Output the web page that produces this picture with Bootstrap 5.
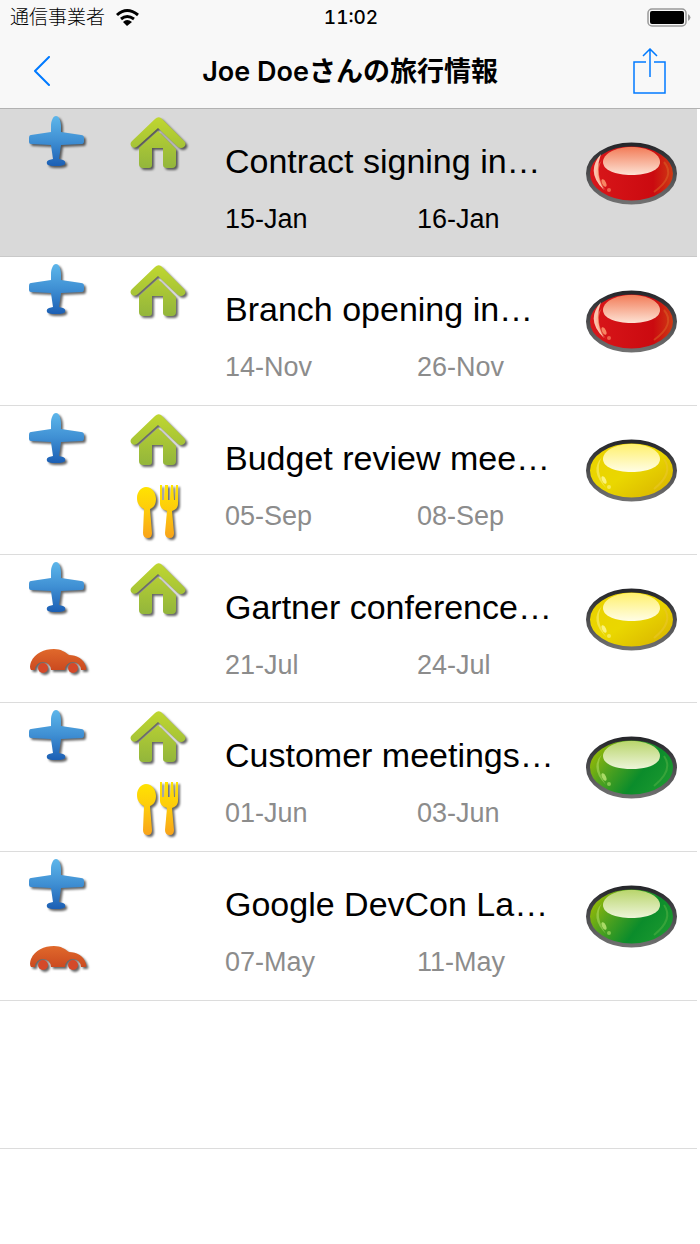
<!DOCTYPE html>
<html lang="ja">
<head>
<meta charset="utf-8">
<meta name="viewport" content="width=device-width, initial-scale=1">
<title>Joe Doeさんの旅行情報</title>
<link rel="stylesheet" href="https://cdn.jsdelivr.net/npm/bootstrap@5.3.0/dist/css/bootstrap.min.css">
<style>
  body { background: #fff; color: #000; font-family: "Liberation Sans", "Noto Sans CJK JP", sans-serif; }
  .app-header { background: #f8f8f8; border-bottom: 1px solid #b2b2b2; font-family: Inter, "Noto Sans CJK JP", sans-serif; }
  .status-bar { height: 36px; padding: 0 8px 0 10px; font-size: 19px; line-height: 36px; }
  .status-bar > div, .title-bar > div { flex: 1 1 0; }
  .carrier { font-weight: 300; }
  .clock { font-weight: 500; font-variant-numeric: tabular-nums; }
  .title-bar { height: 72px; padding: 0 32px; }
  .title-bar h1 { font-size: 27px; line-height: 40px; font-weight: 600; }
  .trips { padding-right: 3px; }
  .trip { height: 149px; border-bottom: 1px solid #dcdcdc; color: #000; }
  .trip:nth-child(3n+1) { height: 148px; }
  a.trip:hover { color: #000; }
  .trip.selected { background: #d9d9d9; border-color: #c9c9c9; }
  .trip-icons { display: grid; grid-template-columns: 60px 60px; grid-template-rows: 60px 60px; column-gap: 41px; row-gap: 12px; padding: 4px 0 0 27px; }
  .trip-icons svg { filter: drop-shadow(2px 2px 1px rgba(0,0,0,.6)); overflow: visible; }
  .in-second { grid-column: 2; grid-row: 2; }
  .in-first { grid-column: 1; grid-row: 2; }
  .trip-text { min-width: 0; padding: 32px 0 0 37px; }
  .trip-title { font-size: 34px; line-height: 40px; margin-bottom: 22px; }
  .trip-dates { font-size: 27px; line-height: 32px; color: #8c8c8c; }
  .selected .trip-dates { color: #000; }
  .trip-dates time { width: 192px; flex: none; }
  .lamp { margin: 33px 20px 0 8px; }
</style>
</head>
<body>
<svg width="0" height="0" class="position-absolute" aria-hidden="true">
  <defs>
    <linearGradient id="blue" x1="0" y1="0" x2="0" y2="1"><stop stop-color="#5db6ea"/><stop offset=".5" stop-color="#3f8fd3"/><stop offset="1" stop-color="#1c5fb4"/></linearGradient>
    <linearGradient id="lime" gradientUnits="userSpaceOnUse" x1="0" y1="5" x2="0" y2="56"><stop stop-color="#bfd630"/><stop offset="1" stop-color="#92b53c"/></linearGradient>
    <linearGradient id="gold" gradientUnits="userSpaceOnUse" x1="0" y1="3" x2="0" y2="58"><stop stop-color="#ffe500"/><stop offset=".5" stop-color="#fdc80d"/><stop offset="1" stop-color="#f8a01c"/></linearGradient>
    <linearGradient id="rust" x1="0" y1="0" x2="0" y2="1"><stop stop-color="#e0692b"/><stop offset="1" stop-color="#cb4a20"/></linearGradient>
    <linearGradient id="rim" x1="0" y1="0" x2="0" y2="1"><stop stop-color="#26272b"/><stop offset="1" stop-color="#707070"/></linearGradient>
    <linearGradient id="redbody" x1="0" y1="0" x2="1" y2="0"><stop stop-color="#d9171a"/><stop offset=".75" stop-color="#cb0a10"/><stop offset="1" stop-color="#cf3f14"/></linearGradient>
    <linearGradient id="yellowbody" x1="0" y1="0" x2="1" y2="1"><stop stop-color="#ead000"/><stop offset=".5" stop-color="#ead700"/><stop offset="1" stop-color="#d5ae00"/></linearGradient>
    <linearGradient id="greenbody" x1="0" y1=".2" x2="1" y2=".7"><stop stop-color="#a5bf00"/><stop offset=".3" stop-color="#56a41d"/><stop offset=".65" stop-color="#0b8c2b"/><stop offset="1" stop-color="#1d9a30"/></linearGradient>
    <linearGradient id="redshine" x1="0" y1="0" x2="0" y2="1"><stop stop-color="#f27c58"/><stop offset="1" stop-color="#fde2d4"/></linearGradient>
    <linearGradient id="yellowshine" x1="0" y1="0" x2="0" y2="1"><stop stop-color="#fff06c"/><stop offset="1" stop-color="#fffde6"/></linearGradient>
    <linearGradient id="greenshine" x1="0" y1="0" x2="0" y2="1"><stop stop-color="#b9d56c"/><stop offset="1" stop-color="#edf5d9"/></linearGradient>

    <symbol id="plane" viewBox="0 0 60 60"><path fill="url(#blue)" d="M29 3C32 3 34 8 34 13V19L54 22Q57 22 57 25V28Q57 31 55 31L34 32L32 46L36 47Q39 48 38 51Q37 53 29 53Q21 53 20 51Q19 48 22 47L26 46L24 32L4 31Q2 31 2 29V25Q2 22 4 22L24 19V13C24 8 26 3 29 3Z"/></symbol>
    <symbol id="house" viewBox="0 0 60 60"><g fill="url(#lime)"><path d="M27 6Q30 3 33 5L56 28Q59 31 56 34Q53 36 50 34L30 15L10 33Q7 36 4 34Q1 31 4 28Z"/><path d="M30 18L48 36V51Q48 55 44 55H39Q35 55 35 52V35H24V52Q24 55 21 55H15Q11 55 11 51V35Z"/></g></symbol>
    <symbol id="cutlery" viewBox="0 0 60 60"><g fill="url(#gold)"><path d="M18 5C24 5 28 11 28 17C28 23 25 26 22 27L24 51Q24 56 20 56Q15 56 15 51L16 27C12 25 9 22 9 16C9 10 13 5 18 5Z"/><path d="M32 3H34V18H36L37 3H40V18H42L43 3H45L46 18H47L48 3H50V22Q50 27 44 29L46 51Q46 56 42 56Q37 56 37 51L39 29Q32 27 32 22Z"/></g></symbol>
    <symbol id="car" viewBox="0 0 60 60"><path fill="url(#rust)" d="M4 39Q2 36 4 31C8 22 17 18 27 18C34 18 38 21 42 24C50 24 57 28 59 36Q60 39 58 39H54A8 8 0 1 0 38 39H24A8 8 0 1 0 8 39Z"/><circle cx="16" cy="37" r="5" fill="#d4492a"/><circle cx="46" cy="37" r="5" fill="#d4492a"/></symbol>
    <symbol id="glint" viewBox="0 0 91 63"><path d="M16 18Q3 32 20 49Q8 31 16 18Z" opacity=".45"/><ellipse cx="18" cy="41" rx="2" ry="4" transform="rotate(-25 18 41)" opacity=".8"/><circle cx="23" cy="48" r="2" opacity=".55"/></symbol>
    <symbol id="red" viewBox="0 0 91 63"><ellipse cx="45.5" cy="31.5" rx="43.5" ry="29" fill="url(#redbody)" stroke="url(#rim)" stroke-width="4"/><path d="M15 12Q-1 30 18 48Q8 31 15 12Z" fill="#fbc3ad"/><path d="M78 20Q90 34 68 50" fill="none" stroke="#d85c24" stroke-width="2" opacity=".6"/><path d="M17 20C17 12 29 5 45.500 5S74 12 74 20C74 28 62 33 45.500 33S17 28 17 20Z" fill="url(#redshine)"/><use href="#glint" fill="#ffa276"/></symbol>
    <symbol id="yellow" viewBox="0 0 91 63"><ellipse cx="45.5" cy="31.5" rx="43.5" ry="29" fill="url(#yellowbody)" stroke="url(#rim)" stroke-width="4"/><path d="M78 20Q88 34 68 50" fill="none" stroke="#e9c72b" stroke-width="2" opacity=".6"/><path d="M17 20C17 12 29 5 45.500 5S74 12 74 20C74 28 62 33 45.500 33S17 28 17 20Z" fill="url(#yellowshine)"/><use href="#glint" fill="#fff99c"/></symbol>
    <symbol id="green" viewBox="0 0 91 63"><ellipse cx="45.5" cy="31.5" rx="43.5" ry="29" fill="url(#greenbody)" stroke="url(#rim)" stroke-width="4"/><path d="M78 20Q88 34 68 50" fill="none" stroke="#4eae43" stroke-width="2" opacity=".6"/><path d="M17 20C17 12 29 5 45.500 5S74 12 74 20C74 28 62 33 45.500 33S17 28 17 20Z" fill="url(#greenshine)"/><use href="#glint" fill="#c1e878"/></symbol>
  </defs>
</svg>

<header class="app-header">
  <div class="status-bar d-flex align-items-center">
    <div class="d-flex align-items-center">
      <span class="carrier">通信事業者</span>
      <svg class="ms-2" width="28" height="20" viewBox="0 0 28 20" aria-hidden="true"><g fill="none" stroke="#000" stroke-width="3"><path d="M4 7Q14 -2 25 7"/><path d="M8 11Q14 6 21 11"/></g><path d="M10 14Q14 10 19 14L14 18Z"/></svg>
    </div>
    <span class="clock">11:02</span>
    <div class="d-flex justify-content-end">
      <svg width="45" height="20" viewBox="0 0 45 20" aria-hidden="true"><rect x="1" y="1" width="38" height="17" rx="4" fill="none" stroke="#999" stroke-width="1.5"/><rect x="3" y="3" width="34" height="13" rx="2"/><path d="M41 6Q46 9.500 41 13Z" fill="#999"/></svg>
    </div>
  </div>
  <nav class="title-bar d-flex align-items-center">
    <div class="d-flex"><button type="button" class="btn p-0 border-0 d-flex" aria-label="戻る"><svg width="20" height="32" viewBox="0 0 20 32" fill="none" stroke="#007aff" stroke-width="2" stroke-linecap="round" stroke-linejoin="round"><path d="M17 1L3 15L17 29"/></svg></button></div>
    <h1 class="m-0 text-nowrap">Joe Doeさんの旅行情報</h1>
    <div class="d-flex justify-content-end"><button type="button" class="btn p-0 border-0 d-flex" aria-label="共有"><svg width="36" height="48" viewBox="0 0 36 48" fill="none" stroke="#007aff" stroke-width="1.5"><path d="M14 14H2V45H33V14H22M18 29V2M11 8L18 1L25 8"/></svg></button></div>
  </nav>
</header>

<main class="trips list-group list-group-flush rounded-0">
  <a href="#t1" class="trip selected d-flex text-decoration-none" aria-current="true">
    <span class="trip-icons"><svg width="60" height="60"><use href="#plane"/></svg><svg width="60" height="60"><use href="#house"/></svg></span>
    <span class="trip-text flex-fill"><span class="trip-title d-block text-nowrap">Contract signing in…</span><span class="trip-dates d-flex"><time>15-Jan</time><time>16-Jan</time></span></span>
    <svg class="lamp flex-shrink-0" width="91" height="63"><use href="#red"/></svg>
  </a>
  <a href="#t2" class="trip d-flex text-decoration-none">
    <span class="trip-icons"><svg width="60" height="60"><use href="#plane"/></svg><svg width="60" height="60"><use href="#house"/></svg></span>
    <span class="trip-text flex-fill"><span class="trip-title d-block text-nowrap">Branch opening in…</span><span class="trip-dates d-flex"><time>14-Nov</time><time>26-Nov</time></span></span>
    <svg class="lamp flex-shrink-0" width="91" height="63"><use href="#red"/></svg>
  </a>
  <a href="#t3" class="trip d-flex text-decoration-none">
    <span class="trip-icons"><svg width="60" height="60"><use href="#plane"/></svg><svg width="60" height="60"><use href="#house"/></svg><svg class="in-second" width="60" height="60"><use href="#cutlery"/></svg></span>
    <span class="trip-text flex-fill"><span class="trip-title d-block text-nowrap">Budget review mee…</span><span class="trip-dates d-flex"><time>05-Sep</time><time>08-Sep</time></span></span>
    <svg class="lamp flex-shrink-0" width="91" height="63"><use href="#yellow"/></svg>
  </a>
  <a href="#t4" class="trip d-flex text-decoration-none">
    <span class="trip-icons"><svg width="60" height="60"><use href="#plane"/></svg><svg width="60" height="60"><use href="#house"/></svg><svg class="in-first" width="60" height="60"><use href="#car"/></svg></span>
    <span class="trip-text flex-fill"><span class="trip-title d-block text-nowrap">Gartner conference…</span><span class="trip-dates d-flex"><time>21-Jul</time><time>24-Jul</time></span></span>
    <svg class="lamp flex-shrink-0" width="91" height="63"><use href="#yellow"/></svg>
  </a>
  <a href="#t5" class="trip d-flex text-decoration-none">
    <span class="trip-icons"><svg width="60" height="60"><use href="#plane"/></svg><svg width="60" height="60"><use href="#house"/></svg><svg class="in-second" width="60" height="60"><use href="#cutlery"/></svg></span>
    <span class="trip-text flex-fill"><span class="trip-title d-block text-nowrap">Customer meetings…</span><span class="trip-dates d-flex"><time>01-Jun</time><time>03-Jun</time></span></span>
    <svg class="lamp flex-shrink-0" width="91" height="63"><use href="#green"/></svg>
  </a>
  <a href="#t6" class="trip d-flex text-decoration-none">
    <span class="trip-icons"><svg width="60" height="60"><use href="#plane"/></svg><svg class="in-first" width="60" height="60"><use href="#car"/></svg></span>
    <span class="trip-text flex-fill"><span class="trip-title d-block text-nowrap">Google DevCon La…</span><span class="trip-dates d-flex"><time>07-May</time><time>11-May</time></span></span>
    <svg class="lamp flex-shrink-0" width="91" height="63"><use href="#green"/></svg>
  </a>
  <div class="trip"></div>
</main>
<script src="https://cdn.jsdelivr.net/npm/bootstrap@5.3.0/dist/js/bootstrap.bundle.min.js"></script>
</body>
</html>
